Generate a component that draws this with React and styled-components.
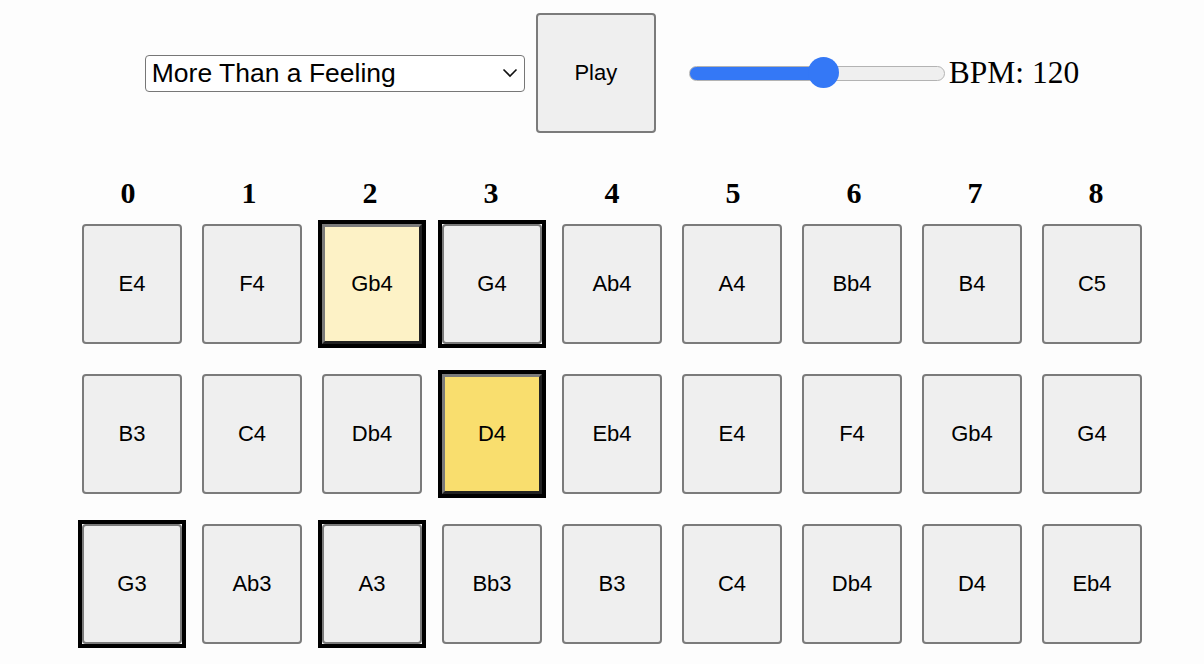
import React, { useState } from "react";
import styled, { createGlobalStyle } from "styled-components";

const GlobalStyle = createGlobalStyle`
    body {
        margin: 0;
        background: #fdfdfd;
        font-family: "Liberation Sans", Arial, sans-serif;
    }
`;

const songs = ["More Than a Feeling", "Hotel California", "Wonderwall"];

const rows = [
    ["E4", "F4", "Gb4", "G4", "Ab4", "A4", "Bb4", "B4", "C5"],
    ["B3", "C4", "Db4", "D4", "Eb4", "E4", "F4", "Gb4", "G4"],
    ["G3", "Ab3", "A3", "Bb3", "B3", "C4", "Db4", "D4", "Eb4"],
];

// chord notes get the black frame, playing ones get a colour
const marked = ["0-2", "0-3", "1-3", "2-0", "2-2"];
const playing = { "0-2": "#fdf2c6", "1-3": "#f9de6e" };

const MIN_BPM = 30;
const MAX_BPM = 200;

const App = () => {
    const [song, setSong] = useState(songs[0]);
    const [bpm, setBpm] = useState(120);
    const fill = ((bpm - MIN_BPM) / (MAX_BPM - MIN_BPM)) * 100;

    return (
        <Page>
            <GlobalStyle />
            <Controls>
                <SelectWrap>
                    <Select value={song} onChange={(e) => setSong(e.target.value)}>
                        {songs.map((s) => (
                            <option key={s} value={s}>
                                {s}
                            </option>
                        ))}
                    </Select>
                    <Chevron width="16" height="10" viewBox="0 0 16 10">
                        <path d="M1.5 1.5 L8 8 L14.5 1.5" fill="none" stroke="#111" strokeWidth="1.6" />
                    </Chevron>
                </SelectWrap>
                <PlayButton>Play</PlayButton>
                <Range
                    type="range"
                    min={MIN_BPM}
                    max={MAX_BPM}
                    value={bpm}
                    $fill={fill}
                    onChange={(e) => setBpm(Number(e.target.value))}
                />
                <Bpm>BPM: {bpm}</Bpm>
            </Controls>

            <Header>
                {rows[0].map((_, i) => (
                    <ColNumber key={i}>{i}</ColNumber>
                ))}
            </Header>

            <Grid>
                {rows.map((row, r) =>
                    row.map((note, c) => {
                        const key = `${r}-${c}`;
                        return (
                            <Slot key={key} $marked={marked.includes(key)}>
                                <Cell $playing={playing[key]}>{note}</Cell>
                            </Slot>
                        );
                    })
                )}
            </Grid>
        </Page>
    );
};

export default App;

const Page = styled.div`
    padding-left: 20px;
    display: flex;
    flex-direction: column;
    align-items: center;
`;

const Controls = styled.div`
    display: flex;
    align-items: center;
    margin-top: 13px;
`;

const SelectWrap = styled.div`
    position: relative;
    width: 380px;
    height: 37px;
`;

const Select = styled.select`
    appearance: none;
    width: 100%;
    height: 100%;
    box-sizing: border-box;
    border: 1.5px solid #777;
    border-radius: 4px;
    background: #fff;
    padding: 0 0 0 6px;
    font-family: "Liberation Sans", Arial, sans-serif;
    font-size: 26.5px;
    color: #000;
`;

const Chevron = styled.svg`
    position: absolute;
    right: 7px;
    top: 13px;
    pointer-events: none;
`;

const PlayButton = styled.button`
    width: 120px;
    height: 120px;
    margin-left: 11px;
    border: 2px solid #7b7b7b;
    border-radius: 4px;
    background: #efefef;
    font-family: "Liberation Sans", Arial, sans-serif;
    font-size: 22px;
    color: #000;
`;

const Range = styled.input`
    -webkit-appearance: none;
    appearance: none;
    width: 256px;
    height: 31px;
    margin: 0 0 0 33px;
    background: transparent;

    &::-webkit-slider-runnable-track {
        box-sizing: border-box;
        height: 15px;
        border-radius: 8px;
        border: 1.5px solid #b3b3b3;
        background: linear-gradient(
            to right,
            #3478f6 ${(p) => p.$fill}%,
            #efefef ${(p) => p.$fill}%
        );
    }

    &::-webkit-slider-thumb {
        -webkit-appearance: none;
        width: 31px;
        height: 31px;
        margin-top: -9.5px;
        border-radius: 50%;
        background: #3478f6;
        border: none;
    }
`;

const Bpm = styled.span`
    margin-left: 4px;
    font-family: "Liberation Serif", "Times New Roman", serif;
    font-size: 31.5px;
    color: #000;
`;

const Header = styled.div`
    display: flex;
    margin-top: 43px;
`;

const ColNumber = styled.div`
    width: 121px;
    text-align: center;
    font-family: "Liberation Serif", "Times New Roman", serif;
    font-weight: bold;
    font-size: 30px;
    line-height: 34px;
`;

const Grid = styled.div`
    display: grid;
    grid-template-columns: repeat(9, 108px);
    column-gap: 12px;
    row-gap: 22px;
    margin-top: 10px;
`;

const Slot = styled.div`
    width: 108px;
    height: 128px;
    box-sizing: border-box;
    border: 4px solid ${(p) => (p.$marked ? "#000" : "transparent")};
`;

const Cell = styled.div`
    width: 100%;
    height: 100%;
    box-sizing: border-box;
    display: flex;
    align-items: center;
    justify-content: center;
    font-family: "Liberation Sans", Arial, sans-serif;
    font-size: 22px;
    color: #000;
    background: ${(p) => p.$playing || "#efefef"};
    border: ${(p) => (p.$playing ? "3px solid" : "2px solid #7b7b7b")};
    border-color: ${(p) => (p.$playing ? "#7a7a7a #222 #222 #7a7a7a" : "#7b7b7b")};
    border-radius: ${(p) => (p.$playing ? "0" : "4px")};
`;
